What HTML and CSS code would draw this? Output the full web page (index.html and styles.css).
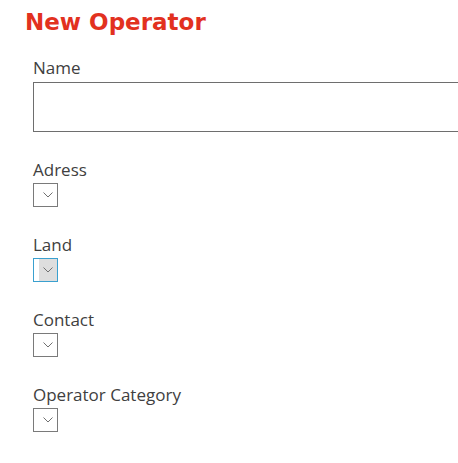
FILE: index.html
```html
<!DOCTYPE html>
<html>
<head>
<meta charset="utf-8">
<link rel="stylesheet" href="styles.css">
</head>
<body>
<div class="page">
  <h1 class="title">New Operator</h1>
  <form class="form">
    <div class="field">
      <label class="label">Name</label>
      <div class="text-input"></div>
    </div>
    <div class="field">
      <label class="label">Adress</label>
      <div class="dropdown"><span class="btn"><svg width="10" height="6" viewBox="0 0 10 6"><path d="M0.5 0.5 L5 5 L9.5 0.5" fill="none" stroke="#707070" stroke-width="1"/></svg></span></div>
    </div>
    <div class="field">
      <label class="label">Land</label>
      <div class="dropdown active"><span class="btn"><svg width="10" height="6" viewBox="0 0 10 6"><path d="M0.5 0.5 L5 5 L9.5 0.5" fill="none" stroke="#707070" stroke-width="1"/></svg></span></div>
    </div>
    <div class="field">
      <label class="label">Contact</label>
      <div class="dropdown"><span class="btn"><svg width="10" height="6" viewBox="0 0 10 6"><path d="M0.5 0.5 L5 5 L9.5 0.5" fill="none" stroke="#707070" stroke-width="1"/></svg></span></div>
    </div>
    <div class="field">
      <label class="label">Operator Category</label>
      <div class="dropdown"><span class="btn"><svg width="10" height="6" viewBox="0 0 10 6"><path d="M0.5 0.5 L5 5 L9.5 0.5" fill="none" stroke="#707070" stroke-width="1"/></svg></span></div>
    </div>
  </form>
</div>
</body>
</html>
```
FILE: styles.css
```css
html, body {
  margin: 0;
  padding: 0;
  background: #ffffff;
  overflow: hidden;
}
.page {
  padding-left: 25px;
  padding-top: 9px;
  overflow: hidden;
}
.title {
  margin: 0;
  font-family: "DejaVu Sans", sans-serif;
  font-weight: bold;
  font-size: 23px;
  line-height: 27px;
  color: #e2311f;
}
.form {
  display: flex;
  flex-direction: column;
  gap: 26px;
  padding-left: 8px;
  margin-top: 20px;
}
.field {
  display: flex;
  flex-direction: column;
  gap: 1px;
}
.label {
  font-family: "Open Sans", sans-serif;
  font-size: 17px;
  line-height: 24px;
  color: #404040;
}
.text-input {
  margin-top: 1px;
  width: 600px;
  height: 48px;
  border: 1px solid #6e6e6e;
}
.dropdown {
  width: 23px;
  height: 22px;
  border: 1px solid #7a7a7a;
  display: flex;
  justify-content: flex-end;
}
.btn {
  width: 18px;
  height: 100%;
  display: flex;
  align-items: center;
  justify-content: center;
}
.dropdown.active {
  border-color: #3aa0cf;
}
.dropdown.active .btn {
  background: #dedede;
}
```
